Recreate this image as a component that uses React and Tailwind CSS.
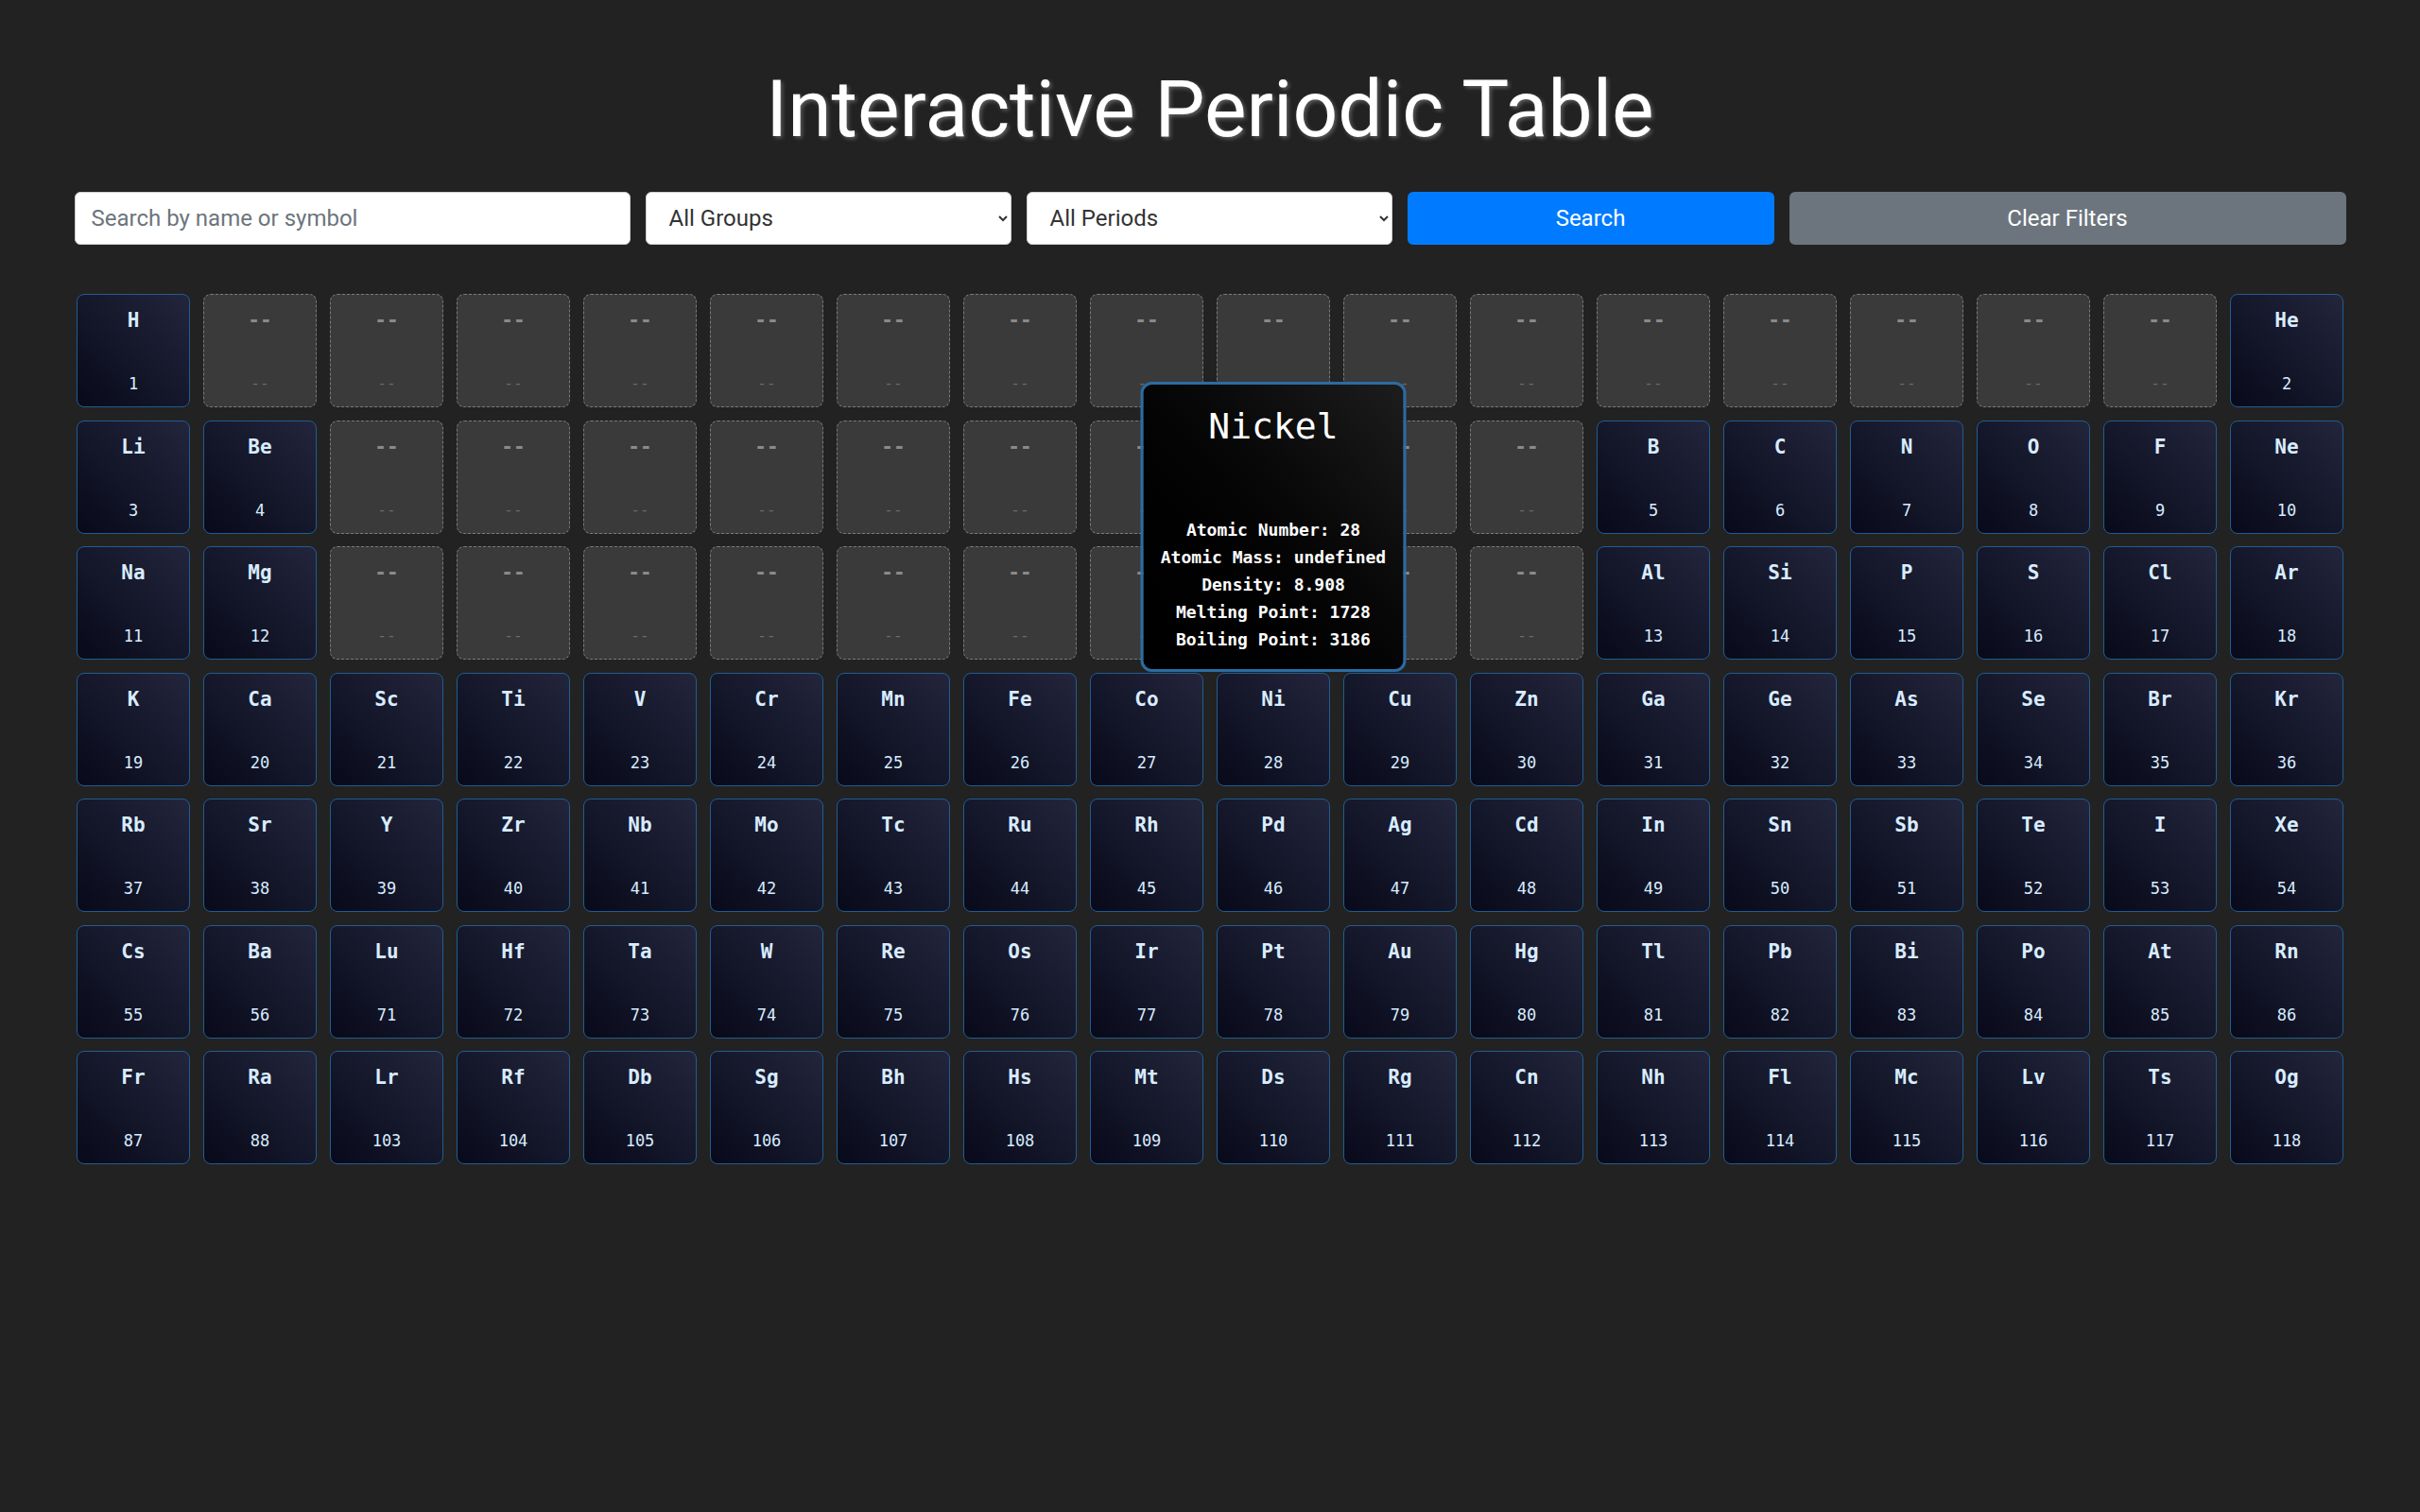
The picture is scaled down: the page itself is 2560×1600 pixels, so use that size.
import React from "react";

const ROWS = [
  [["H", 1], null, null, null, null, null, null, null, null, null, null, null, null, null, null, null, null, ["He", 2]],
  [["Li", 3], ["Be", 4], null, null, null, null, null, null, null, null, null, null, ["B", 5], ["C", 6], ["N", 7], ["O", 8], ["F", 9], ["Ne", 10]],
  [["Na", 11], ["Mg", 12], null, null, null, null, null, null, null, null, null, null, ["Al", 13], ["Si", 14], ["P", 15], ["S", 16], ["Cl", 17], ["Ar", 18]],
  "K Ca Sc Ti V Cr Mn Fe Co Ni Cu Zn Ga Ge As Se Br Kr".split(" ").map((s, i) => [s, 19 + i]),
  "Rb Sr Y Zr Nb Mo Tc Ru Rh Pd Ag Cd In Sn Sb Te I Xe".split(" ").map((s, i) => [s, 37 + i]),
  [["Cs", 55], ["Ba", 56], ...("Lu Hf Ta W Re Os Ir Pt Au Hg Tl Pb Bi Po At Rn".split(" ").map((s, i) => [s, 71 + i]))],
  [["Fr", 87], ["Ra", 88], ...("Lr Rf Db Sg Bh Hs Mt Ds Rg Cn Nh Fl Mc Lv Ts Og".split(" ").map((s, i) => [s, 103 + i]))],
];

const mono = { fontFamily: '"DejaVu Sans Mono", "Liberation Mono", monospace' };

function Tooltip() {
  return (
    <div
      className="absolute bottom-[calc(100%+1px)] left-1/2 -translate-x-1/2 z-10 w-[281px] h-[307px] rounded-[12px] border-[3px] border-[#2b6ca3] bg-gradient-to-tr from-[#000000] to-[#1d1d1d] flex flex-col items-center justify-between pt-[22px] pb-[17px] text-white"
      style={mono}
    >
      <div className="text-[38px] leading-[44px]">Nickel</div>
      <div className="flex flex-col items-center text-[18px] leading-[29px] font-bold whitespace-nowrap">
        <div>Atomic Number: 28</div>
        <div>Atomic Mass: undefined</div>
        <div>Density: 8.908</div>
        <div>Melting Point: 1728</div>
        <div>Boiling Point: 3186</div>
      </div>
    </div>
  );
}

function Cell({ el }) {
  if (!el) {
    return (
      <div className="h-[120px] rounded-[8px] border border-dashed border-[#7a7a7a] bg-[#3a3a3a] flex flex-col items-center pt-[16px] pb-[16px]" style={mono}>
        <div className="text-[21px] leading-[22px] font-bold text-[#8a8a8a]">--</div>
        <div className="mt-auto text-[16px] leading-[16px] text-[#6a6a6a]">--</div>
      </div>
    );
  }
  const [sym, num] = el;
  return (
    <div className="relative h-[120px]">
      <div className="h-full rounded-[8px] border border-[#1f5d92] bg-gradient-to-tr from-[#080a1a] to-[#23253c] flex flex-col items-center pt-[16px] pb-[16px] text-[#d8ecff]" style={mono}>
        <div className="text-[21px] leading-[22px] font-bold">{sym}</div>
        <div className="mt-auto text-[17px] leading-[16px]">{num}</div>
      </div>
      {sym === "Ni" && <Tooltip />}
    </div>
  );
}

export default function App() {
  return (
    <div className="min-h-screen bg-[#222222] pt-[74px]" style={{ fontFamily: 'Roboto, "Noto Sans", sans-serif' }}>
      <h1
        className="text-center text-white text-[84px] leading-none font-normal"
        style={{ textShadow: "2px 2px 4px rgba(120,120,120,0.7)" }}
      >
        Interactive Periodic Table
      </h1>
      <div className="w-[2403px] mx-auto mt-[45px] flex gap-[16px] h-[56px]">
        <input
          className="w-[588px] h-full rounded-[6px] border border-[#cfcfcf] bg-white px-[17px] text-[24px] text-[#333] placeholder:text-[#6c757d] outline-none"
          placeholder="Search by name or symbol"
        />
        <select className="w-[387px] h-full rounded-[6px] border border-[#cfcfcf] bg-white pl-[20px] pr-[14px] text-[24px] text-[#333] outline-none">
          <option>All Groups</option>
        </select>
        <select className="w-[387px] h-full rounded-[6px] border border-[#cfcfcf] bg-white pl-[20px] pr-[14px] text-[24px] text-[#333] outline-none">
          <option>All Periods</option>
        </select>
        <button className="w-[388px] h-full rounded-[6px] bg-[#007bff] text-white text-[24px]">Search</button>
        <button className="w-[589px] h-full rounded-[6px] bg-[#6c757d] text-white text-[24px]">Clear Filters</button>
      </div>
      <div className="w-[2398px] mx-auto mt-[52px] grid grid-cols-[repeat(18,120px)] gap-x-[14px] gap-y-[13.5px] pb-[40px]">
        {ROWS.flatMap((row, r) => row.map((el, c) => <Cell key={r + "-" + c} el={el} />))}
      </div>
    </div>
  );
}
